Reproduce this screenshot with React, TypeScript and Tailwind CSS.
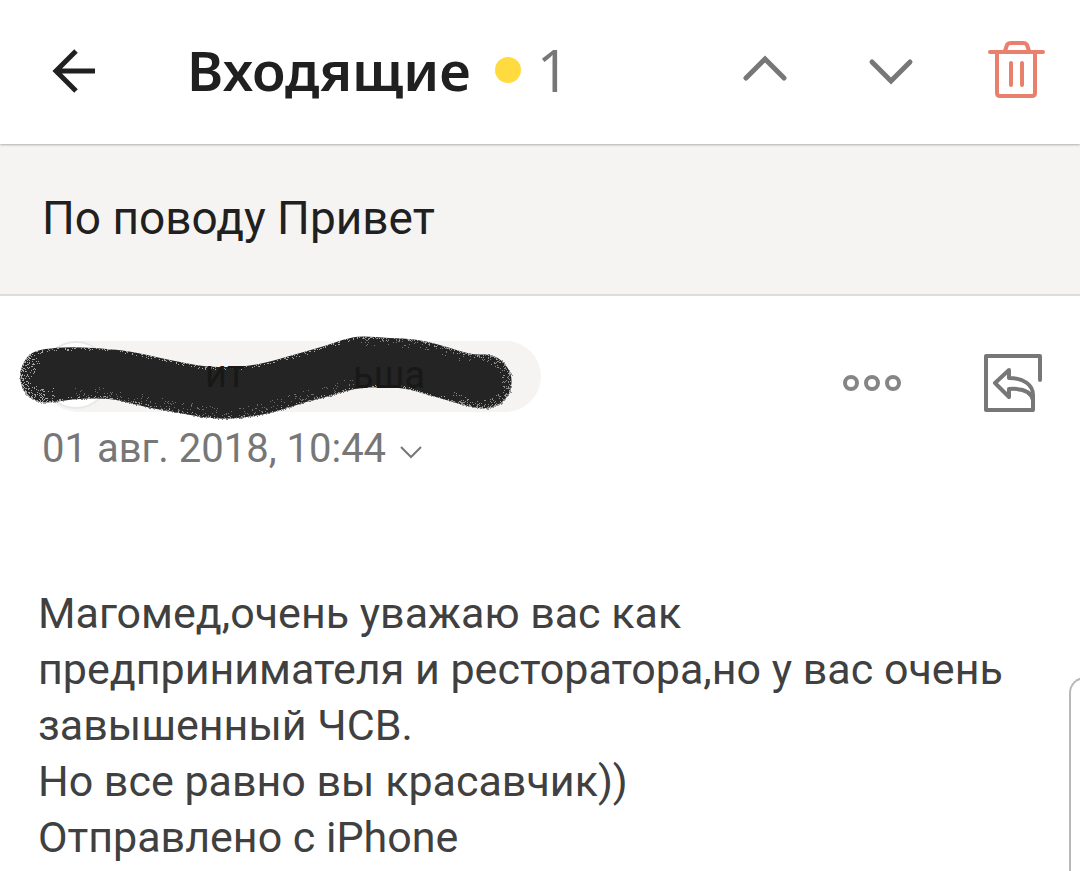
import React from "react";

const bodyLines = [
  "Магомед,очень уважаю вас как",
  "предпринимателя и ресторатора,но у вас очень",
  "завышенный ЧСВ.",
  "Но все равно вы красавчик))",
  "Отправлено с iPhone",
];

// Outline of the brush stroke, clockwise from its left end.
const outline: [number, number][] = [
  [19, 42], [22, 28], [31, 16], [50, 12], [77, 11], [110, 13], [135, 16], [160, 22], [185, 27], [207, 31],
  [230, 31], [250, 30], [272, 25], [300, 17], [325, 10], [345, 3], [360, 0], [390, 2], [415, 3], [437, 8],
  [460, 15], [475, 19], [490, 18], [502, 24], [512, 38], [511, 56], [501, 68], [487, 73], [470, 71],
  [450, 65], [425, 58], [405, 52], [380, 51], [355, 52], [330, 60], [305, 66], [285, 73], [262, 79], [240, 82],
  [222, 83], [200, 81], [175, 76], [150, 72], [125, 66], [108, 62], [75, 63], [55, 66], [40, 67], [25, 59],
];

function makeRandom(seed: number) {
  let s = seed;
  return () => {
    s = (s * 16807) % 2147483647;
    return s / 2147483647;
  };
}

function strokePath() {
  const n = outline.length;
  let d = "";
  for (let i = 0; i < n; i++) {
    const [x, y] = outline[i];
    const [nx, ny] = outline[(i + 1) % n];
    const mx = (x + nx) / 2;
    const my = (y + ny) / 2;
    d += i === 0 ? `M${mx} ${my}` : `Q${x} ${y} ${mx} ${my}`;
  }
  const [x0, y0] = outline[0];
  const [x1, y1] = outline[1];
  return `${d}Q${x0} ${y0} ${(x0 + x1) / 2} ${(y0 + y1) / 2}Z`;
}

// Fine grains scattered along the rim, denser towards the edge.
function grainPath(seed: number, depth: number, perPixel: number, from = 0, to = outline.length) {
  const rnd = makeRandom(seed);
  let d = "";
  for (let i = from; i < to; i++) {
    const [ax, ay] = outline[i % outline.length];
    const [bx, by] = outline[(i + 1) % outline.length];
    const len = Math.hypot(bx - ax, by - ay);
    const nx = -(by - ay) / len;
    const ny = (bx - ax) / len;
    for (let k = 0; k < len * perPixel; k++) {
      const t = rnd();
      const r = rnd();
      const off = r * r * depth;
      const x = Math.round(ax + (bx - ax) * t + nx * off);
      const y = Math.round(ay + (by - ay) * t + ny * off);
      d += `M${x} ${y}h1v1h-1z`;
    }
  }
  return d;
}

const ink = strokePath();
const rim = grainPath(71, 3, 0.6);
const leftCap = grainPath(913, 14, 3, 46, 51);
const rightCap = grainPath(377, 10, 2, 22, 29);
const lowerEdge = grainPath(5501, 12, 1.2, 33, 45);
const upperEdge = grainPath(8123, 9, 0.8, 16, 22);

function Scribble() {
  return (
    <svg className="absolute inset-0" width="540" height="90" viewBox="0 0 540 90" aria-hidden="true">
      <path d={ink} fill="#242424" />
      <path d={rim} fill="#a5a5a3" />
      <path d={leftCap} fill="#a5a5a3" />
      <path d={rightCap} fill="#8b8b89" />
      <path d={lowerEdge} fill="#6d6d6b" />
      <path d={upperEdge} fill="#777775" />
      <g fill="#181818" fontFamily="Roboto, sans-serif" fontSize="38">
        <text x="205" y="51">ит</text>
        <text x="353" y="52">ьша</text>
      </g>
    </svg>
  );
}

export default function App() {
  return (
    <div className="relative min-h-screen overflow-hidden bg-white font-[Roboto,sans-serif] text-[#202020]">
      <header className="relative flex h-36 items-center justify-between pr-8 pb-1 pl-12 shadow-[0_1px_2px_#aaa]">
        <div className="flex items-center">
          <button aria-label="Назад" className="mr-[87px]">
            <svg width="52" height="52" viewBox="0 0 52 52" fill="none" stroke="#202020" strokeWidth="5">
              <path d="M47 27H9M28 7L8 27L28 47" />
            </svg>
          </button>
          <h1 className="font-['Noto_Sans',sans-serif] text-[55px] leading-[80px] font-semibold">Входящие</h1>
          <span className="ml-6 size-[26px] rounded-full bg-[#ffdb40]" />
          <span className="ml-4 font-['Open_Sans',sans-serif] text-[58px] leading-[80px] text-[#777]">1</span>
        </div>
        <nav className="flex items-center" aria-label="Письма">
          <button aria-label="Предыдущее письмо" className="mr-[78px]">
            <svg width="48" height="48" viewBox="0 0 48 48" fill="none" stroke="#777" strokeWidth="5" strokeLinecap="round">
              <path d="M6 32L25 13L44 32" />
            </svg>
          </button>
          <button aria-label="Следующее письмо" className="mr-[70px]">
            <svg width="48" height="48" viewBox="0 0 48 48" fill="none" stroke="#777" strokeWidth="5" strokeLinecap="round">
              <path d="M6 16L25 35L44 16" />
            </svg>
          </button>
          <button aria-label="Удалить">
            <svg width="64" height="64" viewBox="0 0 64 64" fill="none" stroke="#e9806d" strokeWidth="4" strokeLinecap="round" strokeLinejoin="round">
              <path d="M6 14H59M13 15V55Q13 58 16 58H48Q51 58 51 55V15M21 13L23 7Q24 5 27 5H39Q42 5 43 7L45 13M27 25V47M38 25V47" />
            </svg>
          </button>
        </nav>
      </header>

      <section className="mt-px flex h-[151px] items-center border-b-2 border-[#dedddb] bg-[#f5f4f2] px-[42px] pb-1">
        <h2 className="text-[46px] leading-[56px]">По поводу Привет</h2>
      </section>

      <main>
        <div className="flex justify-between pt-10 pr-8 pl-[42px]">
          <div>
            <div className="relative -ml-[42px] h-[86px] w-[541px]">
              <div className="ml-[42px] flex h-full items-start pt-[5px]">
                <div className="h-[71px] w-full rounded-full bg-[#f5f4f2]">
                  <div className="size-[68px] rounded-full border-2 border-[#e8e8e6] bg-white" />
                </div>
              </div>
              <Scribble />
            </div>
            <button className="flex items-center gap-2 text-[40px] leading-[54px] text-[#777]">
              <span>01 авг. 2018, 10:44</span>
              <svg className="mt-2" width="28" height="24" viewBox="0 0 28 24" fill="none" stroke="#777" strokeWidth="2">
                <path d="M7 6L17 16L27 6" />
              </svg>
            </button>
          </div>
          <div className="flex h-24 items-center gap-20">
            <button aria-label="Ещё">
              <svg width="62" height="24" viewBox="0 0 62 24" fill="none" stroke="#858585" strokeWidth="4">
                <circle cx="11" cy="11" r="6" />
                <circle cx="32" cy="11" r="6" />
                <circle cx="53" cy="11" r="6" />
              </svg>
            </button>
            <button aria-label="Ответить">
              <svg width="66" height="64" viewBox="0 0 66 64" fill="none" stroke="#777" strokeWidth="4" strokeLinecap="round" strokeLinejoin="round">
                <path d="M58 28V4H4V58H51V43C51 33 42 26 27 26V18L13 31L27 45V37C41 36 49 40 51 48" />
              </svg>
            </button>
          </div>
        </div>
        <article className="px-[38px] pt-[109px] text-[43px] leading-[56px] text-[#404040]">
          {bodyLines.map((line) => (
            <p key={line}>{line}</p>
          ))}
        </article>
      </main>
      <div className="absolute -right-4 bottom-0 h-[194px] w-[27px] rounded-tl-[16px] border-t-2 border-l-2 border-[#b8b8b8]" />
    </div>
  );
}
